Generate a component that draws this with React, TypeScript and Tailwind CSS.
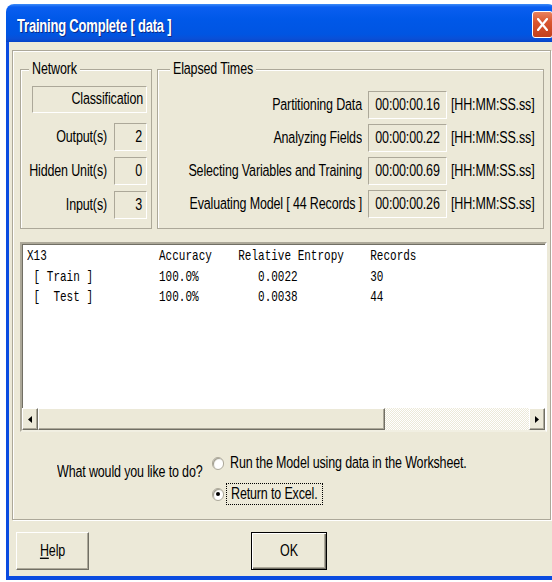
import React from "react";

const raised =
  "border border-t-white border-l-white border-r-[#716f64] border-b-[#716f64] shadow-[inset_-1px_-1px_0_#aca899]";
const sunken = "border border-[#aca899] border-r-white border-b-white";

const netRows = [
  { label: "Output(s)", value: "2" },
  { label: "Hidden Unit(s)", value: "0" },
  { label: "Input(s)", value: "3" },
];

const timeRows = [
  { label: "Partitioning Data", value: "00:00:00.16" },
  { label: "Analyzing Fields", value: "00:00:00.22" },
  { label: "Selecting Variables and Training", value: "00:00:00.69" },
  { label: "Evaluating Model [ 44 Records ]", value: "00:00:00.26" },
];

const report = [
  "X13                 Accuracy    Relative Entropy    Records",
  " [ Train ]          100.0%         0.0022           30",
  " [  Test ]          100.0%         0.0038           44",
];

// dialog text: narrow glyphs drawn tall, like the old Tahoma UI font
function T({ children, className = "" }: { children: React.ReactNode; className?: string }) {
  return <span className={`inline-block whitespace-nowrap scale-y-[1.35] ${className}`}>{children}</span>;
}

function Radio({ checked }: { checked?: boolean }) {
  return (
    <span className="w-[12px] h-[13px] rounded-full bg-white border border-[#aca899] shadow-[inset_1px_1px_1px_#9d9a8a] flex items-center justify-center shrink-0">
      {checked && <span className="w-[4px] h-[4px] rounded-full bg-black" />}
    </span>
  );
}

function Arrow({ dir }: { dir: "left" | "right" }) {
  return (
    <svg width="4" height="7" viewBox="0 0 4 7">
      <polygon points={dir === "left" ? "4,0 0,3.5 4,7" : "0,0 4,3.5 0,7"} fill="#000" />
    </svg>
  );
}

export default function App() {
  return (
    <div className="w-[552px] h-[582px] overflow-hidden bg-white pt-[4px] font-['Liberation_Sans',Arial,sans-serif] text-[12.5px] tracking-[-0.15px] text-black">
      <div className="ml-[6px] w-[550px] flex flex-col">
        {/* title bar */}
        <div className="h-[38px] rounded-t-[8px] bg-[linear-gradient(to_bottom,#3d8bf7_0%,#0a5ef0_8%,#0058e8_40%,#0055e2_80%,#0a4fd6_92%,#0342c8_100%)] flex items-start pl-[11px] pr-[3px]">
          <span className="mt-[14px] inline-block scale-y-[1.45] font-bold text-[13px] tracking-[-0.2px] leading-[16px] text-white [text-shadow:1px_1px_0_#0a2a8a]">
            Training Complete [ data ]
          </span>
          <div className="ml-auto mt-[7px] w-[21px] h-[27px] rounded-[3px] border border-white bg-[linear-gradient(to_bottom,#e8825e,#d9562f_40%,#c2401c)] flex items-center justify-center">
            <svg width="11" height="13" viewBox="0 0 11 13">
              <path d="M1 1 L10 12 M10 1 L1 12" stroke="#fff" strokeWidth="2.2" strokeLinecap="round" />
            </svg>
          </div>
        </div>

        <div className="h-[538px] border-x-[3px] border-b-[4px] border-[#0a4be0] bg-[#ece9d8] px-[3px] pt-[8px]">
          <div className="w-[539px] border border-[#aca899] shadow-[1px_1px_0_#fff,inset_1px_1px_0_#fff] pt-[10px] pl-[7px] pb-[14px]">
            <div className="flex gap-[5px]">
              <fieldset className="w-[132px] h-[168px] border border-[#aca899] shadow-[inset_1px_1px_0_#fff] flex flex-col">
                <legend className="ml-[8px] px-[3px] leading-[16px] bg-[#ece9d8]">
                  <T>Network</T>
                </legend>
                <div className={`mt-[9px] ml-[11px] w-[115px] h-[27px] ${sunken} flex items-center justify-end pr-[3px]`}>
                  <T>Classification</T>
                </div>
                <div className="mt-[10px] flex flex-col gap-[6px]">
                  {netRows.map((r) => (
                    <div key={r.label} className="flex items-center h-[28px]">
                      <span className="w-[86px] text-right">
                        <T>{r.label}</T>
                      </span>
                      <span className={`ml-[7px] w-[33px] h-[28px] ${sunken} flex items-center justify-end pr-[4px]`}>
                        <T>{r.value}</T>
                      </span>
                    </div>
                  ))}
                </div>
              </fieldset>

              <fieldset className="w-[387px] h-[168px] border border-[#aca899] shadow-[inset_1px_1px_0_#fff] flex flex-col">
                <legend className="ml-[12px] px-[3px] leading-[16px] bg-[#ece9d8]">
                  <T>Elapsed Times</T>
                </legend>
                <div className="mt-[14px] flex flex-col gap-[5px]">
                  {timeRows.map((r) => (
                    <div key={r.label} className="flex items-center h-[28px]">
                      <span className="w-[204px] text-right">
                        <T>{r.label}</T>
                      </span>
                      <span className={`ml-[6px] w-[79px] h-[28px] ${sunken} flex items-center justify-center`}>
                        <T>{r.value}</T>
                      </span>
                      <T className="ml-[4px]">[HH:MM:SS.ss]</T>
                    </div>
                  ))}
                </div>
              </fieldset>
            </div>

            {/* results list */}
            <div className="mt-[13px] w-[527px] h-[190px] border-2 border-[#aca899] border-r-white border-b-[#f1efe2] shadow-[inset_1px_1px_0_#716f64] bg-white flex flex-col">
              <div className="flex-1 pl-[5px] pt-[2px] font-['Liberation_Mono',monospace] text-[11px] tracking-normal leading-[20.5px] whitespace-pre">
                {report.map((line, i) => (
                  <div key={i} className="scale-y-[1.25] origin-center">
                    {line}
                  </div>
                ))}
              </div>
              <div className="h-[22px] flex bg-[#ece9d8]">
                <div className={`w-[16px] ${raised} flex items-center justify-center`}>
                  <Arrow dir="left" />
                </div>
                <div className={`w-[347px] ${raised} bg-[#ece9d8]`} />
                <div className="flex-1 bg-[repeating-conic-gradient(#ffffff_0_25%,#ece9d8_0_50%)] bg-[length:2px_2px]" />
                <div className={`w-[16px] ${raised} flex items-center justify-center`}>
                  <Arrow dir="right" />
                </div>
              </div>
            </div>

            {/* next step */}
            <div className="flex">
              <div className="ml-[37px] w-[155px] mt-[29px] leading-[22px]">
                <T>What would you like to do?</T>
              </div>
              <div className="mt-[20px] flex flex-col gap-[9px]">
                <label className="flex items-center h-[22px]">
                  <Radio />
                  <span className="ml-[2px] h-[22px] border border-transparent px-[3px] flex items-center">
                    <T>Run the Model using data in the Worksheet.</T>
                  </span>
                </label>
                <label className="flex items-center h-[22px]">
                  <Radio checked />
                  <span className="ml-[2px] h-[22px] border border-dotted border-black px-[4px] flex items-center">
                    <T>Return to Excel.</T>
                  </span>
                </label>
              </div>
            </div>
          </div>

          {/* buttons */}
          <div className="flex mt-[12px] ml-[4px]">
            <button className={`w-[73px] h-[38px] ${raised} bg-[#ece9d8] flex items-center justify-center`}>
              <T>
                <span className="underline underline-offset-1">H</span>elp
              </T>
            </button>
            <button className="ml-[162px] w-[76px] h-[38px] border border-black bg-[#ece9d8] shadow-[inset_1px_1px_0_#fff,inset_-1px_-1px_0_#716f64,inset_-2px_-2px_0_#aca899] flex items-center justify-center">
              <T>OK</T>
            </button>
          </div>
        </div>
      </div>
    </div>
  );
}
